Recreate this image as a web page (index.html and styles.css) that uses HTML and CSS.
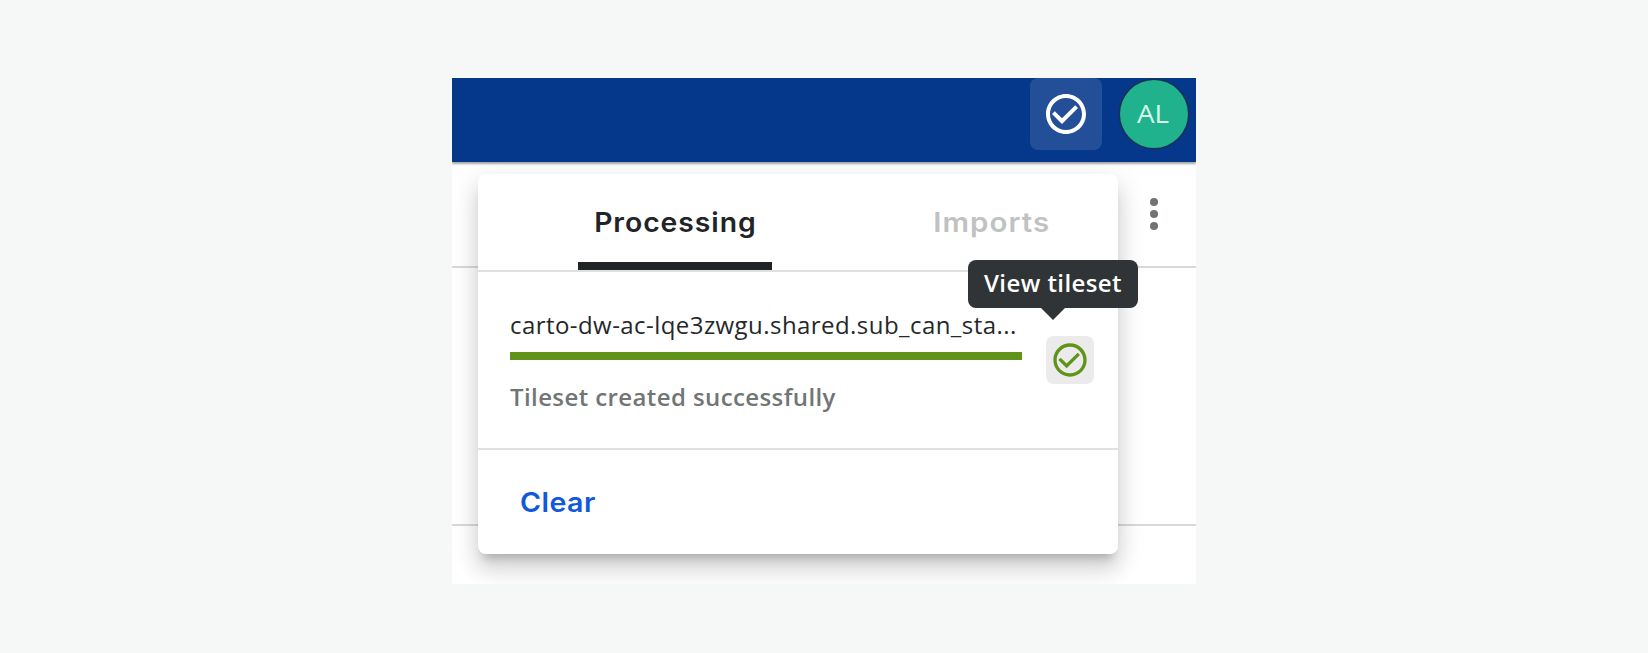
FILE: index.html
```
<!DOCTYPE html>
<html lang="en">
<head>
<meta charset="utf-8">
<title>Processing</title>
<link rel="stylesheet" href="styles.css">
</head>
<body>
<main class="frame">
  <header class="topbar">
    <button class="status-button" aria-label="Activity">
      <svg width="48" height="48" viewBox="0 0 24 24" fill="currentColor"><path d="M16.59 7.58 10 14.17l-3.59-3.58L5 12l5 5 8-8zM12 2C6.48 2 2 6.48 2 12s4.48 10 10 10 10-4.48 10-10S17.52 2 12 2zm0 18c-4.42 0-8-3.58-8-8s3.58-8 8-8 8 3.58 8 8-3.58 8-8 8z"/></svg>
    </button>
    <div class="avatar"><span class="initials">AL</span></div>
  </header>
  <section class="page">
    <div class="toolbar">
      <svg width="48" height="48" viewBox="0 0 24 24" fill="currentColor"><circle cx="12" cy="6" r="2"/><circle cx="12" cy="12" r="2"/><circle cx="12" cy="18" r="2"/></svg>
    </div>
    <div class="row"></div>
  </section>

  <section class="menu">
    <nav class="tabs">
      <div class="tab active"><span class="processing">Processing</span></div>
      <div class="tab"><span class="imports">Imports</span></div>
    </nav>
    <div class="job">
      <div class="details">
        <div class="name">carto-dw-ac-lqe3zwgu.shared.sub_can_sta...</div>
        <div class="progress"></div>
        <div class="message">Tileset created successfully</div>
      </div>
      <button class="view-button" aria-label="View tileset">
        <svg width="40" height="40" viewBox="0 0 24 24" fill="currentColor"><path d="M16.59 7.58 10 14.17l-3.59-3.58L5 12l5 5 8-8zM12 2C6.48 2 2 6.48 2 12s4.48 10 10 10 10-4.48 10-10S17.52 2 12 2zm0 18c-4.42 0-8-3.58-8-8s3.58-8 8-8 8 3.58 8 8-3.58 8-8 8z"/></svg>
      </button>
    </div>
    <footer class="actions"><button class="clear">Clear</button></footer>
    <div class="tooltip">View tileset</div>
  </section>
</main>
</body>
</html>
```
FILE: styles.css
```
* { box-sizing: border-box; }
body {
  margin: 0;
  padding: 78px 452px 69px;
  height: 653px;
  overflow: hidden;
  background: #f5f8f7;
  font-family: "Open Sans", sans-serif;
}
button { border: 0; padding: 0; background: none; font: inherit; color: inherit; }
svg { display: block; }
.frame { position: relative; height: 506px; overflow: hidden; background: #fff; }
.topbar {
  position: relative;
  z-index: 1;
  display: flex;
  justify-content: flex-end;
  gap: 18px;
  height: 84px;
  padding-right: 8px;
  background: #05378a;
  box-shadow: 0 2px 2px rgba(0, 0, 0, .35);
}
.status-button {
  display: grid;
  place-items: center;
  width: 72px;
  height: 72px;
  border-radius: 8px;
  background: #234f98;
  color: #fff;
}
.avatar {
  display: grid;
  place-items: center;
  width: 68px;
  height: 68px;
  margin-top: 2px;
  border-radius: 50%;
  background: #20b28c;
  box-shadow: 0 0 0 1.5px #182f55;
  color: #d3f8ec;
  font: 400 26px/32px "Open Sans", sans-serif;
}
.initials { margin: -2px 1px 0 0; transform: scaleX(1.07); }
.page { color: #707373; }
.toolbar {
  display: flex;
  justify-content: flex-end;
  height: 106px;
  padding: 28px 18px 0;
  border-bottom: 2px solid #d8d9d9;
}
.row { height: 258px; border-bottom: 2px solid #d8d9d9; }
.menu {
  position: absolute;
  top: 96px;
  left: 26px;
  width: 640px;
  height: 380px;
  border-radius: 8px;
  background: #fff;
  box-shadow: 0 10px 10px -6px rgba(0, 0, 0, .2), 0 16px 20px 2px rgba(0, 0, 0, .11), 0 6px 28px 4px rgba(0, 0, 0, .08);
}
.tabs {
  display: flex;
  gap: 146px;
  height: 98px;
  padding-left: 100px;
  border-bottom: 2px solid #dfe0e0;
}
.tab {
  display: flex;
  justify-content: center;
  padding-top: 29px;
  width: 148px;
  color: #c0c2c2;
  font: 600 27px/40px Inter, sans-serif;
}
.active { width: 194px; border-bottom: 8px solid #202427; color: #202427; }
.processing { letter-spacing: .9px; transform: scaleX(1.05); }
.imports { letter-spacing: 1px; transform: scaleX(1.09); }
.job {
  display: flex;
  gap: 24px;
  height: 178px;
  padding: 37px 24px 0 32px;
  border-bottom: 2px solid #dfe0e0;
}
.details { width: 512px; }
.name { color: #24282a; font-size: 24px; line-height: 32px; letter-spacing: .44px; white-space: nowrap; }
.progress { height: 8px; margin-top: 11px; background: #5f9319; }
.message { margin-top: 21px; color: #727575; font-size: 24px; font-weight: 600; line-height: 32px; letter-spacing: .4px; white-space: nowrap; }
.view-button {
  display: grid;
  place-items: center;
  width: 48px;
  height: 48px;
  margin-top: 27px;
  border-radius: 8px;
  background: #ebebeb;
  color: #5f9319;
}
.actions { padding: 33px 42px; }
.clear {
  color: #1158dc;
  font: 600 27px/40px Inter, sans-serif;
  letter-spacing: .4px;
  transform: scaleX(1.06);
  transform-origin: left;
}
.tooltip {
  position: absolute;
  top: 86px;
  left: 490px;
  width: 170px;
  height: 48px;
  padding: 7px 0 9px 16px;
  border-radius: 8px;
  background: #303437;
  color: #fff;
  font-size: 24px;
  font-weight: 600;
  line-height: 32px;
  letter-spacing: .42px;
  white-space: nowrap;
}
.tooltip::after {
  content: "";
  position: absolute;
  top: 48px;
  left: 73px;
  border: 12px solid transparent;
  border-top-color: #303437;
  border-bottom: 0;
}
```
